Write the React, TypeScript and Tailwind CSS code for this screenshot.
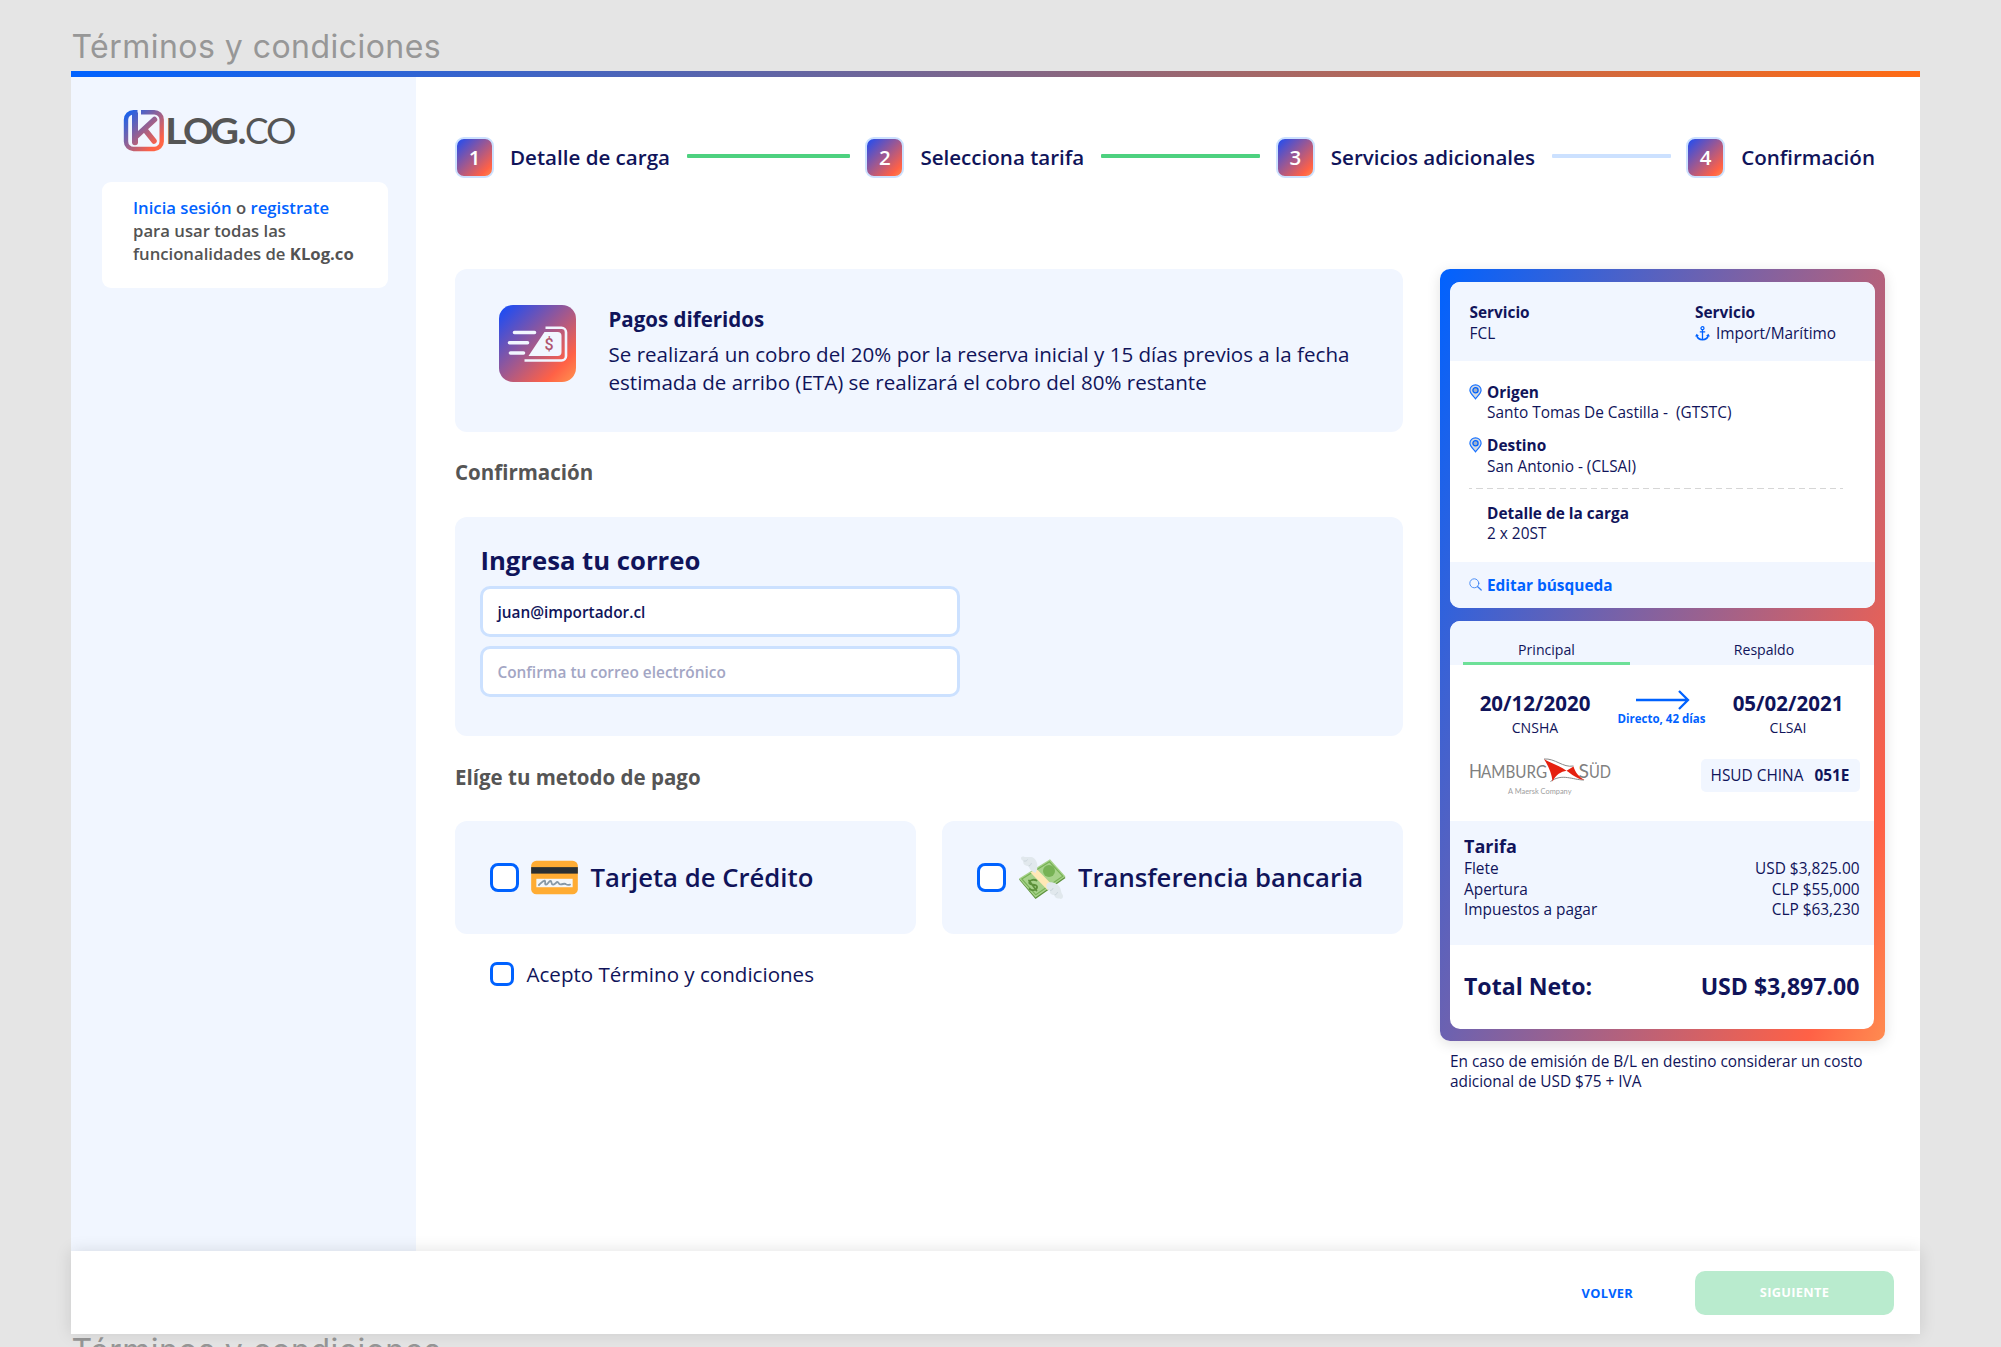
import React from "react";

function StepBadge({ n }: { n: number }) {
  return (
    <div className="flex h-[41px] w-[39px] shrink-0 items-center justify-center rounded-[9px] border-[2.5px] border-[#cce1ff] bg-[linear-gradient(135deg,#0f4bff_0%,#ff6146_80%,#ff944f_100%)] bg-origin-border text-[20.5px] font-semibold text-white">
      {n}
    </div>
  );
}

function Step({ n, label, line }: { n: number; label: string; line?: "done" | "pending" }) {
  return (
    <div className={line ? "flex h-[41px] w-[410.4px] shrink-0 items-center" : "flex h-[41px] shrink-0 items-center"}>
      <StepBadge n={n} />
      <span className="ml-[16px] whitespace-nowrap text-[20.57px] font-semibold leading-[28px] text-[#10145a]">
        {label}
      </span>
      {line && (
        <div
          className={
            line === "done"
              ? "mb-[3px] ml-[17px] mr-[15.5px] h-[4px] flex-1 rounded-[1px] bg-[#4dd17f]"
              : "mb-[3px] ml-[17px] mr-[15.5px] h-[4px] flex-1 rounded-[1px] bg-[#cce1ff]"
          }
        />
      )}
    </div>
  );
}

function KlogLogo() {
  return (
    <svg width="180" height="60" viewBox="0 -8 180 60" className="-mt-[8px] block shrink-0">
      <defs>
        <linearGradient id="klogStroke" gradientUnits="userSpaceOnUse" x1="0" y1="1" x2="41" y2="42">
          <stop offset="0" stopColor="#0062ff" />
          <stop offset="0.82" stopColor="#ff6146" />
          <stop offset="1" stopColor="#ff7048" />
        </linearGradient>
      </defs>
      <g fill="none" stroke="url(#klogStroke)">
        <path
          d="M14.5 3.2H10.5A7.5 7.5 0 0 0 3 10.7V32.500A7.500 7.500 0 0 0 10.500 40H31.200A7.500 7.500 0 0 0 38.700 32.500V10.700A7.500 7.500 0 0 0 31.200 3.200H18"
          strokeWidth="4.400"
        />
        <path d="M12 3.500V33" strokeWidth="6" />
        <path d="M12 32V33.200" strokeWidth="6" strokeLinecap="round" />
        <path d="M12 28.500L31.500 10.500M23 22L31 32" strokeWidth="5.500" strokeLinecap="round" />
      </g>
      <text y="34.700" fill="#555555" fontFamily="Lato" fontSize="36" fontWeight="700">
        <tspan x="42" textLength="21.500" lengthAdjust="spacingAndGlyphs">L</tspan>
        <tspan x="60" textLength="30.500" lengthAdjust="spacingAndGlyphs">O</tspan>
        <tspan x="87.500" textLength="28.500" lengthAdjust="spacingAndGlyphs">G</tspan>
        <tspan x="114.500" textLength="9" lengthAdjust="spacingAndGlyphs">.</tspan>
        <tspan x="122" fontWeight="400" textLength="23.500" lengthAdjust="spacingAndGlyphs">C</tspan>
        <tspan x="143" fontWeight="400" textLength="30.500" lengthAdjust="spacingAndGlyphs">O</tspan>
      </text>
    </svg>
  );
}

function DeferredIcon() {
  return (
    <div className="h-[77px] w-[77px] shrink-0 rounded-[14px] bg-[linear-gradient(135deg,#0f4bff_0%,#ff6146_80%,#ff944f_100%)]">
      <svg width="77" height="77" viewBox="0 0 77 77">
        <g stroke="#f1f6ff" strokeWidth="3.600" strokeLinecap="round" fill="none">
          <path d="M15.500 27.500H35.500M10.500 37.700H28.500M11.500 48H24.500" />
        </g>
        <path
          d="M46.500 22.800H62.500A4.500 4.500 0 0 1 67 27.300V51A4.500 4.500 0 0 1 62.500 55.500H25.500"
          stroke="#f1f6ff"
          strokeWidth="2.600"
          fill="none"
        />
        <path d="M45.500 27H58.500A4 4 0 0 1 62.500 31V47A4 4 0 0 1 58.500 51H29.500Z" fill="#f1f6ff" />
        <text x="50" y="45" textAnchor="middle" fontFamily="Roboto" fontSize="16" fontWeight="500" fill="#b0556f">
          $
        </text>
      </svg>
    </div>
  );
}

function CreditCardIcon() {
  return (
    <svg width="47" height="35" viewBox="0 0 36 27">
      <rect x="0" y="0.500" width="36" height="26" rx="4" fill="#ffac33" />
      <rect x="0" y="5.500" width="36" height="5" fill="#292f33" />
      <rect x="4" y="14.500" width="28" height="6.500" fill="#f4f7f9" />
      <path
        d="M6 19.300C8 17.500 9 15.800 10.500 16C11.500 16.300 10 19 11.500 19C13 19 13.500 16 15 16.200C16.300 16.500 15 19.200 17 19C19 18.800 19 16.800 20.500 17C21.500 17.200 21 19 23 18.800C25 18.500 26 17.800 27 18.800C28 19.500 29 19.300 30 19"
        fill="none"
        stroke="#8899a6"
        strokeWidth="1.400"
        strokeLinecap="round"
      />
    </svg>
  );
}

function MoneyIcon() {
  return (
    <svg width="49" height="46" viewBox="0 0 49 46">
      <path d="M1 24.500L32 5.300L47.500 23L17.500 44Z" fill="#5c913b" />
      <path d="M1 23.500L32 4.300L47.500 21.500L17.500 42.500Z" fill="#a7d28b" />
      <path d="M3.800 24L31.500 6.800L44.800 21.200L17.800 39.800Z" fill="none" stroke="#77b255" strokeWidth="1.200" />
      <ellipse cx="31" cy="16" rx="6" ry="6" fill="#77b255" />
      <path
        d="M18.500 25.500C15.500 23.800 10 25.500 11.500 28.500C13 30.500 18 28.500 19 31.500C19.500 35 14.500 36 11.500 34M11 25.500L18.500 35.500"
        fill="none"
        stroke="#5c913b"
        strokeWidth="1.800"
        strokeLinecap="round"
      />
      <path d="M12.500 17.500L18.500 13.700L35 30.800L29.500 35Z" fill="#ffe8b6" />
      <path
        d="M17.500 18C13 16 11.500 14 10.500 11C6.500 11 4.500 8.500 5.500 6C2.500 5 2 1 5.500 1.500C8.500 3 11.500 1 15 2.500C19.500 5 21 12 17.500 18Z"
        fill="#e1e8ed"
      />
      <path
        d="M29 28.500C32.500 26 38 27.500 40.500 30.500C43.500 33.500 42.500 37 44.500 39.500C46 42 44 45 41.500 43.500C38.500 44 36.500 42.500 36.500 40C32 40 31.500 37.500 32 35.500C28.500 34.500 27.500 31.500 29 28.500Z"
        fill="#e1e8ed"
      />
      <path
        d="M10.500 11C13 10.500 13 9 13.500 8M5.500 6C8 6.500 9 5.500 9.500 4.500M32 35.500C33.500 35.500 35 34.500 35 33M36.500 40C38.500 39.500 39.500 38 39.500 37"
        fill="none"
        stroke="#ccd6dd"
        strokeWidth="1"
      />
    </svg>
  );
}

function AnchorIcon() {
  return (
    <svg width="15" height="15" viewBox="0 0 15 15" fill="none" stroke="#0062ff">
      <circle cx="7.500" cy="2.200" r="1.500" strokeWidth="1.300" />
      <path d="M7.500 3.700V13.500M4.800 5.800H10.200" strokeWidth="1.300" />
      <path d="M1.800 9.500C2.300 12.200 4.600 13.600 7.500 13.800C10.400 13.600 12.700 12.200 13.200 9.500" strokeWidth="1.500" />
      <path d="M0 10.600L1.700 7.800L4 10.100ZM15 10.600L13.300 7.800L11 10.100Z" fill="#0062ff" stroke="none" />
    </svg>
  );
}

function PinIcon() {
  return (
    <svg width="13" height="16" viewBox="0 0 13 16" className="block">
      <path
        d="M6.500 14.800C4.500 12.200 0.900 9.300 0.900 6.300A5.600 5.500 0 0 1 12.100 6.300C12.100 9.300 8.500 12.200 6.500 14.800Z"
        fill="#d3d9e2"
        stroke="#1a73ff"
        strokeWidth="1.200"
      />
      <circle cx="6.500" cy="6.200" r="2.600" fill="#9fb0c8" stroke="#0062ff" strokeWidth="1.300" />
    </svg>
  );
}

function SearchIcon() {
  return (
    <svg width="13" height="13" viewBox="0 0 13 13" fill="none" stroke="#3d84f5" strokeLinecap="round">
      <circle cx="5.300" cy="5.300" r="4.500" strokeWidth="0.900" />
      <path d="M8.700 8.700L12.200 12" strokeWidth="1.300" />
    </svg>
  );
}

function HamburgSud() {
  return (
    <svg width="146" height="50" viewBox="0 -8 146 50" className="-mt-[8px] block">
      <g fill="#808080" fontFamily="Lato" fontWeight="400">
        <text x="0" y="19" fontSize="18.500" textLength="13" lengthAdjust="spacingAndGlyphs">H</text>
        <text x="12" y="19" fontSize="16.500" textLength="66" lengthAdjust="spacingAndGlyphs">AMBURG</text>
        <text x="109.500" y="19" fontSize="18.500" textLength="10.500" lengthAdjust="spacingAndGlyphs">S</text>
        <text x="120" y="19" fontSize="16.500" textLength="22" lengthAdjust="spacingAndGlyphs">ÜD</text>
        <text x="39" y="34.500" fontSize="7.800" fill="#a0a0a0" textLength="63.500" lengthAdjust="spacingAndGlyphs">
          A Maersk Company
        </text>
      </g>
      <path d="M75 0C86 -1 94 9 104.500 7M81.500 22.500C93 14 104 21 115 21" fill="none" stroke="#8a8a8a" strokeWidth="1" />
      <path d="M75 0.300C80 3 91 7 97.500 11.700C92 12.500 87 15.500 83.500 22.500C83 15 79 6 75 0.300Z" fill="#e5200f" />
      <path d="M97.500 11.700L104.500 7.500C106 13 110 18 115.500 21C108 20 102.500 15 97.500 11.700Z" fill="#e5200f" />
    </svg>
  );
}

function LongArrow() {
  return (
    <svg width="54" height="20" viewBox="0 0 54 20" fill="none" stroke="#0062ff" strokeWidth="2.300">
      <path d="M0 10H52M43 1L52 10L43 19" />
    </svg>
  );
}

function Box({ small }: { small?: boolean }) {
  return (
    <div
      className={
        small
          ? "h-[24px] w-[24px] shrink-0 rounded-[7px] border-[3px] border-[#0062ff] bg-white"
          : "h-[29px] w-[29px] shrink-0 rounded-[8px] border-[3px] border-[#0062ff] bg-white"
      }
    />
  );
}

function Sidebar() {
  return (
    <aside className="w-[345px] shrink-0 bg-[#f1f6ff] pt-[32px]">
      <div className="ml-[52px] flex h-[44px] items-start">
        <KlogLogo />
      </div>
      <div className="ml-[31px] mt-[29px] h-[106px] w-[286px] rounded-[9px] bg-white pl-[31px] pt-[14px] text-[16.7px] font-semibold leading-[23.1px] text-[#535353]">
        <p className="whitespace-nowrap">
          <span className="text-[#0062ff]">Inicia sesión</span> o <span className="text-[#0062ff]">registrate</span>
        </p>
        <p className="whitespace-nowrap">para usar todas las</p>
        <p className="whitespace-nowrap">
          funcionalidades de <b className="font-bold">KLog.co</b>
        </p>
      </div>
    </aside>
  );
}

function MainColumn() {
  return (
    <div className="w-[948px] shrink-0 text-[#10145a]">
      <section className="flex h-[163px] rounded-[12px] bg-[#f1f6ff] pl-[44.400px] pt-[36px]">
        <DeferredIcon />
        <div className="ml-[32.100px]">
          <h2 className="text-[20.5px] font-bold leading-[28px]">Pagos diferidos</h2>
          <p className="mt-[7px] whitespace-nowrap text-[20.57px] leading-[28px]">
            Se realizará un cobro del 20% por la reserva inicial y 15 días previos a la fecha
            <br />
            estimada de arribo (ETA) se realizará el cobro del 80% restante
          </p>
        </div>
      </section>
      <h3 className="mt-[26px] text-[20.5px] font-bold leading-[28px] text-[#555555]">Confirmación</h3>
      <section className="mt-[31px] h-[219px] rounded-[12px] bg-[#f1f6ff] pl-[25.400px] pt-[26px]">
        <h2 className="text-[25.7px] font-bold leading-[35px]">Ingresa tu correo</h2>
        <div className="mt-[8px] flex h-[51px] w-[480px] items-center rounded-[10px] border-[3px] border-[#cce1ff] bg-white pl-[14px] pt-[1.500px] text-[15.4px] font-semibold">
          juan@importador.cl
        </div>
        <div className="mt-[9px] flex h-[51px] w-[480px] items-center rounded-[10px] border-[3px] border-[#cce1ff] bg-white pl-[14px] pt-[1.500px] text-[15.4px] font-semibold text-[#a3a6c4]">
          Confirma tu correo electrónico
        </div>
      </section>
      <h3 className="mt-[27px] text-[20.5px] font-bold leading-[28px] text-[#555555]">Elíge tu metodo de pago</h3>
      <div className="mt-[30px] flex gap-[26px]">
        <div className="flex h-[113px] w-[460.500px] items-center rounded-[12px] bg-[#f1f6ff] pl-[35px]">
          <Box />
          <div className="ml-[12px]">
            <CreditCardIcon />
          </div>
          <span className="ml-[12.500px] whitespace-nowrap text-[25.7px] font-semibold leading-[35px]">
            Tarjeta de Crédito
          </span>
        </div>
        <div className="flex h-[113px] w-[461.500px] items-center rounded-[12px] bg-[#f1f6ff] pl-[35.500px]">
          <Box />
          <div className="ml-[12px]">
            <MoneyIcon />
          </div>
          <span className="ml-[11px] whitespace-nowrap text-[25.7px] font-semibold leading-[35px]">
            Transferencia bancaria
          </span>
        </div>
      </div>
      <div className="ml-[35px] mt-[26px] flex h-[28px] items-center">
        <Box small />
        <span className="ml-[12.500px] whitespace-nowrap text-[20.57px] leading-[28px]">Acepto Término y condiciones</span>
      </div>
    </div>
  );
}

function SearchSummary() {
  return (
    <div className="flex h-[326px] w-[425px] flex-col overflow-hidden rounded-[10px] bg-white text-[15.4px] leading-[20.6px]">
      <div className="flex h-[79px] bg-[#f1f6ff] pl-[19.500px] pt-[21px]">
        <div className="w-[225.500px]">
          <p className="font-bold">Servicio</p>
          <p>FCL</p>
        </div>
        <div>
          <p className="font-bold">Servicio</p>
          <p className="flex items-center gap-[6px]">
            <AnchorIcon />
            Import/Marítimo
          </p>
        </div>
      </div>
      <div className="h-[200.500px] px-[19px] pt-[21.500px]">
        <div className="flex gap-[5px]">
          <div className="pt-[1px]">
            <PinIcon />
          </div>
          <div>
            <p className="font-bold">Origen</p>
            <p className="whitespace-pre">{"Santo Tomas De Castilla -  (GTSTC)"}</p>
          </div>
        </div>
        <div className="mt-[12.800px] flex gap-[5px]">
          <div className="pt-[1px]">
            <PinIcon />
          </div>
          <div>
            <p className="font-bold">Destino</p>
            <p>San Antonio - (CLSAI)</p>
          </div>
        </div>
        <div className="mt-[10.500px] h-px w-[374px] bg-[repeating-linear-gradient(90deg,#d6d6d6_0_6.4px,transparent_6.4px_10.4px)] bg-[position:-3px_0]" />
        <div className="ml-[18px] mt-[14.500px]">
          <p className="font-bold">Detalle de la carga</p>
          <p>2 x 20ST</p>
        </div>
      </div>
      <div className="flex flex-1 items-center gap-[5px] bg-[#f1f6ff] pl-[19px] font-bold text-[#0062ff]">
        <SearchIcon />
        <span className="pt-[4px]">Editar búsqueda</span>
      </div>
    </div>
  );
}

function RateSummary() {
  return (
    <div className="flex h-[408px] w-[423.500px] flex-col overflow-hidden rounded-[10px] bg-white">
      <div className="flex h-[44px] bg-[#f1f6ff] pl-[13px] text-center text-[14.1px]">
        <div className="flex h-[44px] w-[167px] shrink-0 flex-col justify-end border-b-[3px] border-[#6de098] pb-[3px] leading-[19px]">
          Principal
        </div>
        <div className="flex h-[44px] w-[268px] shrink-0 flex-col justify-end pb-[6px] leading-[19px]">Respaldo</div>
      </div>
      <div className="h-[156px] pl-[19px] pr-[14px] pt-[25px]">
        <div className="flex justify-between pl-[10px] pr-[15.500px]">
          <div className="w-[112px] text-center">
            <p className="whitespace-nowrap text-[20.5px] font-bold leading-[27px]">20/12/2020</p>
            <p className="text-[14.1px] leading-[22px]">CNSHA</p>
          </div>
          <div className="flex w-[100px] flex-col items-center">
            <div className="ml-[3px] h-[20px]">
              <LongArrow />
            </div>
            <p className="whitespace-nowrap text-[11.5px] font-bold leading-[17px] text-[#0062ff]">Directo, 42 días</p>
          </div>
          <div className="w-[112px] text-center">
            <p className="whitespace-nowrap text-[20.5px] font-bold leading-[27px]">05/02/2021</p>
            <p className="text-[14.1px] leading-[22px]">CLSAI</p>
          </div>
        </div>
        <div className="mt-[20px] flex items-start justify-between">
          <HamburgSud />
          <div className="flex h-[33px] w-[159px] items-center justify-center rounded-[5px] bg-[#f1f6ff] pt-[2px] text-[15.4px]">
            <span className="whitespace-nowrap">HSUD CHINA</span>
            <span className="ml-[11px] font-bold">051E</span>
          </div>
        </div>
      </div>
      <div className="h-[124px] bg-[#f1f6ff] pl-[14px] pr-[14px] pt-[13px] text-[15.4px] leading-[20.6px]">
        <p className="text-[18px] font-bold leading-[25.500px]">Tarifa</p>
        <p className="flex justify-between">
          <span>Flete</span>
          <span>USD $3,825.00</span>
        </p>
        <p className="flex justify-between">
          <span>Apertura</span>
          <span>CLP $55,000</span>
        </p>
        <p className="flex justify-between">
          <span>Impuestos a pagar</span>
          <span>CLP $63,230</span>
        </p>
      </div>
      <div className="flex flex-1 items-center justify-between px-[14px] text-[23.1px] font-bold">
        <span>Total Neto:</span>
        <span>USD $3,897.00</span>
      </div>
    </div>
  );
}

function SummaryColumn() {
  return (
    <div className="ml-[37px] w-[445px] shrink-0 text-[#10145a]">
      <div className="flex h-[771.500px] flex-col gap-[12.500px] rounded-[10px] bg-[linear-gradient(109deg,#0062ff_0%,#ff6146_89%,#ff8b50_100%)] pl-[10px] pt-[13px] shadow-[0_3px_14px_rgba(0,0,0,0.12)]">
        <SearchSummary />
        <RateSummary />
      </div>
      <p className="ml-[10px] mt-[11px] whitespace-nowrap text-[15.4px] leading-[20.6px]">
        En caso de emisión de B/L en destino considerar un costo
        <br />
        adicional de USD $75 + IVA
      </p>
    </div>
  );
}

export default function App() {
  return (
    <div className="h-[1347px] w-[2001px] overflow-hidden bg-[#e5e5e5] font-['Open_Sans',sans-serif]">
      <div className="h-[71px] pl-[71.500px] pt-[27px] font-['Inter',sans-serif] text-[32px] leading-[40px] tracking-[0.46px] text-[#979797]">
        Términos y condiciones
      </div>
      <div className="ml-[71px] flex h-[1263px] w-[1849px] flex-col bg-white">
        <div className="h-[5.500px] shrink-0 bg-[linear-gradient(90deg,#0062ff_0%,#ff6a13_100%)]" />
        <div className="flex h-[1174.500px] shrink-0">
          <Sidebar />
          <main className="flex-1 pl-[39px] pt-[60px]">
            <div className="flex">
              <Step n={1} label="Detalle de carga" line="done" />
              <Step n={2} label="Selecciona tarifa" line="done" />
              <Step n={3} label="Servicios adicionales" line="pending" />
              <Step n={4} label="Confirmación" />
            </div>
            <div className="mt-[91.500px] flex">
              <MainColumn />
              <SummaryColumn />
            </div>
          </main>
        </div>
        <footer className="relative flex flex-1 items-center justify-end bg-white pr-[26px] text-[12.8px] font-bold tracking-[0.3px] shadow-[0_0_16px_rgba(0,0,0,0.12)]">
          <span className="mr-[62px] pt-[2px] text-[#0062ff]">VOLVER</span>
          <div className="flex h-[44px] w-[199px] items-center justify-center rounded-[10px] bg-[#b9ebce] text-white">SIGUIENTE</div>
        </footer>
      </div>
      <div className="pl-[71.500px] font-['Inter',sans-serif] text-[32px] leading-[34px] tracking-[0.46px] text-[#979797]">
        Términos y condiciones
      </div>
    </div>
  );
}
